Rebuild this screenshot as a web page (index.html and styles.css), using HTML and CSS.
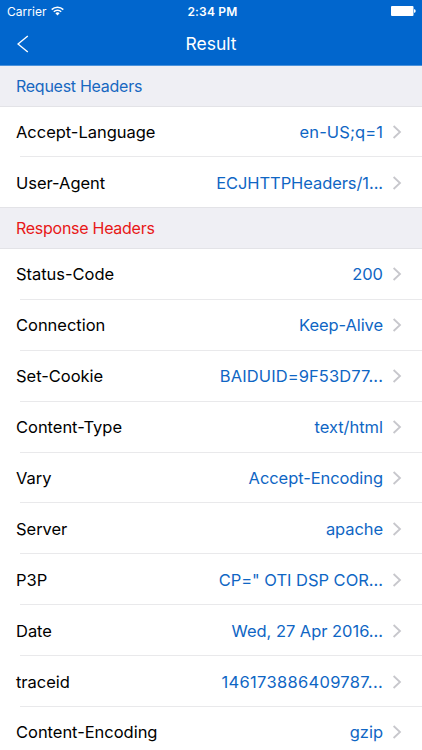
FILE: index.html
```html
<!DOCTYPE html>
<html lang="en">
<head>
<meta charset="utf-8">
<title>Result</title>
<link rel="stylesheet" href="styles.css">
</head>
<body>
<svg width="0" height="0" class="defs"><symbol id="chevron" viewBox="0 0 10 16"><path d="M1.6 2 8 8 1.6 14" fill="none" stroke="#c7c7cc" stroke-width="1.8"/></symbol></svg>
<header class="top">
  <div class="status">
    <div class="carrier"><span>Carrier</span>
      <svg class="wifi" width="13" height="10" viewBox="0 0 13 10"><g fill="none" stroke="#fff" stroke-width="1.5"><path d="M.7 3.6a8.2 8.2 0 0 1 11.6 0"/><path d="M2.8 5.8a5.2 5.2 0 0 1 7.4 0"/></g><path d="M4.4 7.3a3 3 0 0 1 4.2 0L6.5 9.5z" fill="#fff"/></svg>
    </div>
    <div class="time">2:34 PM</div>
    <svg class="battery" width="25" height="10" viewBox="0 0 25 10"><rect width="22.5" height="10" rx="1" fill="#fff"/><path d="M23 3.2h.5q1.2 0 1.2 1.8t-1.2 1.8H23z" fill="#fff"/></svg>
  </div>
  <nav class="nav">
    <svg class="back" width="12" height="18" viewBox="0 0 12 18"><path d="M10.8 1 1 9l9.8 8" fill="none" stroke="#fff" stroke-width="1.4"/></svg>
    <h1>Result</h1>
    <span></span>
  </nav>
</header>
<main>
  <h2 class="section">Request Headers</h2>
  <ul>
    <li><span>Accept-Language</span><b class="wide">en-US;q=1</b><svg><use href="#chevron"/></svg></li>
    <li><span>User-Agent</span><b class="tight">ECJHTTPHeaders/1...</b><svg><use href="#chevron"/></svg></li>
  </ul>
  <h2 class="section response">Response Headers</h2>
  <ul>
    <li><span>Status-Code</span><b>200</b><svg><use href="#chevron"/></svg></li>
    <li><span>Connection</span><b class="tight">Keep-Alive</b><svg><use href="#chevron"/></svg></li>
    <li><span>Set-Cookie</span><b class="wide">BAIDUID=9F53D77...</b><svg><use href="#chevron"/></svg></li>
    <li><span>Content-Type</span><b>text/html</b><svg><use href="#chevron"/></svg></li>
    <li><span>Vary</span><b class="tight">Accept-Encoding</b><svg><use href="#chevron"/></svg></li>
    <li><span>Server</span><b class="tight">apache</b><svg><use href="#chevron"/></svg></li>
    <li><span>P3P</span><b>CP=" OTI DSP COR...</b><svg><use href="#chevron"/></svg></li>
    <li><span>Date</span><b>Wed, 27 Apr 2016...</b><svg><use href="#chevron"/></svg></li>
    <li><span>traceid</span><b class="digits">146173886409787...</b><svg><use href="#chevron"/></svg></li>
    <li><span>Content-Encoding</span><b>gzip</b><svg><use href="#chevron"/></svg></li>
  </ul>
</main>
</body>
</html>
```
FILE: styles.css
```css
* { box-sizing: border-box; margin: 0; padding: 0; }
html, body { height: 750px; overflow: hidden; }
body { width: 422px; background: #fff; font-family: Inter, "Liberation Sans", sans-serif; font-size: 16.5px; letter-spacing: -0.03px; color: #000; }
.defs { display: none; }
.top { height: 66px; background: #0166cd; color: #fff; border-bottom: 1px solid #4b92db; }
.status { height: 22px; display: grid; grid-template-columns: 1fr auto 1fr; align-items: center; padding: 0 6px 0 7px; font-size: 12px; letter-spacing: .05px; }
.carrier { display: flex; align-items: center; gap: 4px; }
.time { font-weight: 600; letter-spacing: .2px; padding-left: 2px; }
.battery { justify-self: end; }
.nav { height: 43px; display: grid; grid-template-columns: 1fr auto 1fr; align-items: center; padding: 0 17px; }
h1 { font-size: 17.5px; font-weight: 400; letter-spacing: 0; }
.section { height: 41px; line-height: 40px; padding-left: 16px; background: #efeff4; border-bottom: 1px solid #e3e3e7; font-size: 16px; font-weight: 400; letter-spacing: -0.27px; color: #1768c1; }
.response { height: 42px; line-height: 41px; border-top: 1px solid #e3e3e7; color: #e81717; }
ul { list-style: none; }
li { height: 50.9px; display: grid; grid-template-columns: 1fr auto 10px; align-items: center; padding: 0 20px 0 16px; background: linear-gradient(#e9e9eb, #e9e9eb) 20px 100% / 100% 1px no-repeat; }
li:last-child { background: none; }
ul:first-of-type li { height: 50px; }
ul:first-of-type li:last-child { padding-top: 1px; }
li b { font-weight: 400; color: #0f66c4; margin-right: 9px; }
li .wide { letter-spacing: .1px; }
li .tight { letter-spacing: -.08px; }
li .digits { letter-spacing: .3px; }
li svg { width: 10px; height: 16px; }
```
